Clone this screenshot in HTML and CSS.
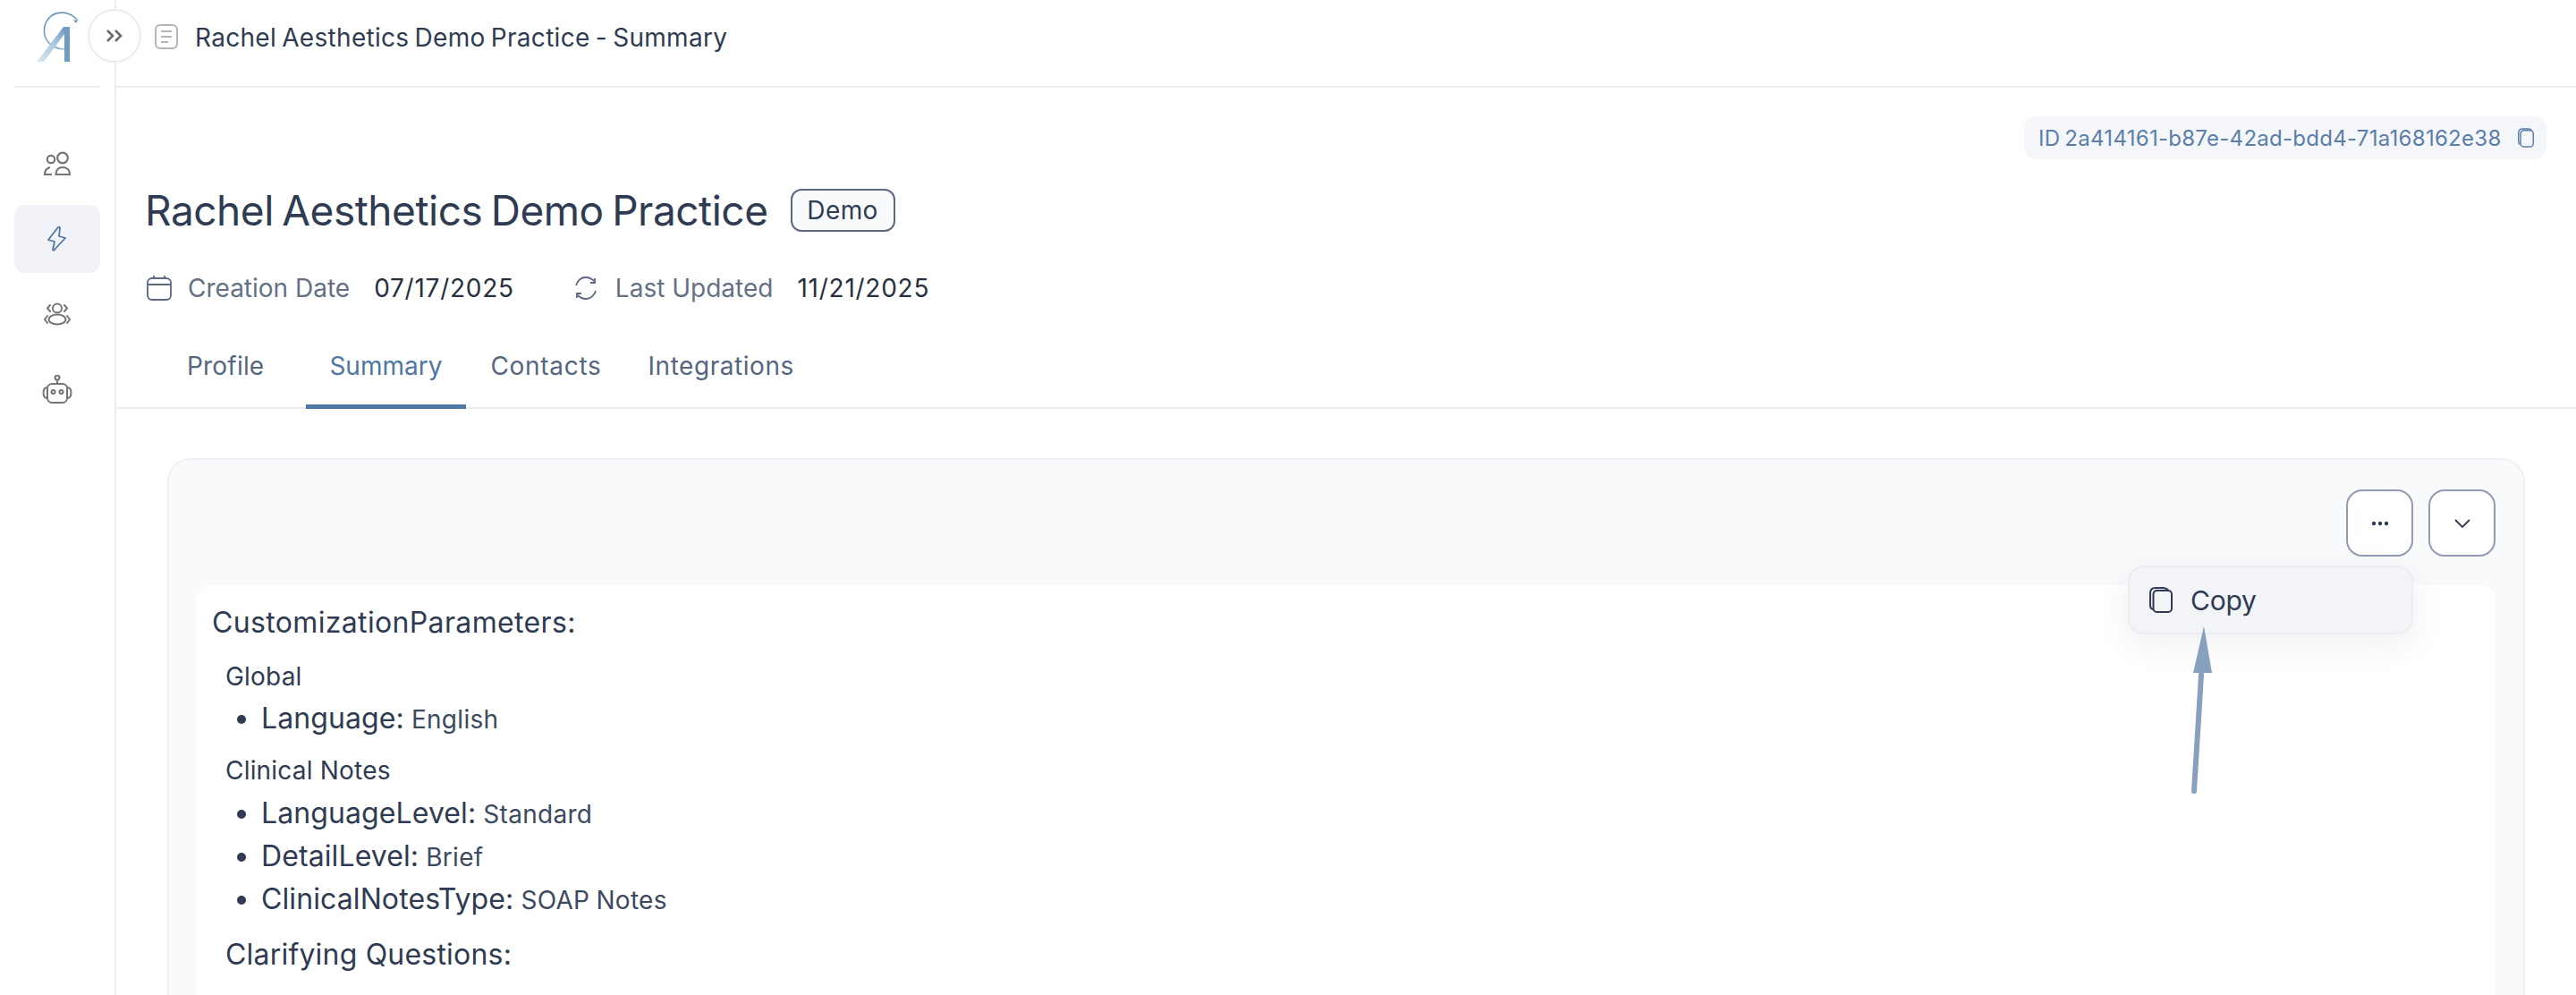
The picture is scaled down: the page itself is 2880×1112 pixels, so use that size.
FILE: index.html
```html
<!DOCTYPE html>
<html lang="en">
<head>
<meta charset="utf-8">
<title>Rachel Aesthetics Demo Practice - Summary</title>
<link rel="stylesheet" href="styles.css">
</head>
<body>
<div class="app">
  <aside class="sidebar">
    <div class="brand">
      <svg class="logo" viewBox="0 0 96 96" width="96" height="96" fill="none">
        <defs>
          <linearGradient id="lg" x1="0" y1="1" x2="1" y2="0"><stop offset="0" stop-color="#dbe8f2"/><stop offset=".55" stop-color="#a9c5dc"/><stop offset="1" stop-color="#5f8fb8"/></linearGradient>
          <linearGradient id="lr" x1="0" y1="0" x2="1" y2="1"><stop offset="0" stop-color="#5b8ab5"/><stop offset=".7" stop-color="#8eb0cc"/><stop offset="1" stop-color="#dfe9f1"/></linearGradient>
        </defs>
        <path d="M87 23C78 12 62 11 54 21C47 30 48 43 57 50C61 53 66 55 72 55" stroke="url(#lr)" stroke-width="1.6"/>
        <path d="M87 23.5l-5-1.5 2.500 3.500z" fill="#5b8ab5"/>
        <polygon points="41,69 49,69 78,30 71,30" fill="url(#lg)"/>
        <polygon points="72,30 78,30 78,69 72,69" fill="#6f9cc0"/>
      </svg>
    </div>
    <nav class="side-nav">
      <a class="side-item">
        <svg viewBox="0 0 32 28" width="32" height="28" fill="none" stroke="#757575" stroke-width="2.200"><circle cx="9" cy="9" r="4.200"/><circle cx="22" cy="7.500" r="5.800"/><path d="M10 26H2c0-4 2-7 6-8"/><path d="M14.500 26c0-5 3-8 7.500-8s8 3 8 8z"/></svg>
      </a>
      <a class="side-item active">
        <svg viewBox="0 0 24 28" width="24" height="28" fill="none" stroke="#4f77a3" stroke-width="1.800" stroke-linejoin="round"><path d="M13 1L2 15l7 2-2 9c0 1 1 1 2 0l12-13-7-2 1-9c0-1-1-2-2-1z"/></svg>
      </a>
      <a class="side-item">
        <svg viewBox="0 0 30 26" width="30" height="26" fill="none" stroke="#757575" stroke-width="2" stroke-linecap="round"><circle cx="15" cy="6.500" r="5"/><ellipse cx="15" cy="19" rx="9.500" ry="5.500"/><path d="M7 3L4 6.500 7 10M23 3l3 3.500-3 3.500M4 15l-3 4 3 4M26 15l3 4-3 4"/></svg>
      </a>
      <a class="side-item">
        <svg viewBox="0 0 34 32" width="34" height="32" fill="none" stroke="#757575" stroke-width="2"><circle cx="17" cy="3" r="2.500"/><path d="M17 6v4"/><rect x="6" y="10" width="22" height="21" rx="5"/><circle cx="12.500" cy="19" r="2"/><circle cx="21.500" cy="19" r="2"/><path d="M6 14C3 14 1.500 16 1.500 20s1.500 6 4.500 6M28 14c3 0 4.500 2 4.500 6s-1.500 6-4.500 6"/></svg>
      </a>
    </nav>
  </aside>

  <button class="collapse" type="button">
    <svg viewBox="0 0 20 16" width="20" height="16" fill="none" stroke="#6b6b6b" stroke-width="2.600"><path d="M2 2l6 6-6 6M11 2l6 6-6 6"/></svg>
  </button>

  <main class="main">
    <header class="topbar">
      <svg class="doc" viewBox="0 0 26 28" width="26" height="28" fill="none" stroke="#b4b4b4" stroke-width="2"><rect x="1" y="1" width="24" height="26" rx="5"/><path d="M7 8h12M7 14h12M7 20h8"/></svg>
      <span class="top-title">Rachel Aesthetics Demo Practice - Summary</span>
    </header>

    <div class="id-row">
      <div class="id-pill">
        <span>ID 2a414161-b87e-42ad-bdd4-71a168162e38</span>
        <svg viewBox="0 0 20 24" width="20" height="22" fill="none" stroke="#5b7fa8" stroke-width="1.600"><path d="M3 20c-1.500-.5-2-1.500-2-3V6c0-3 1.500-5 5-5h7c2 0 3 .5 4 2"/><rect x="3.500" y="3" width="15.500" height="20" rx="4"/></svg>
      </div>
    </div>

    <div class="title-row">
      <h1>Rachel Aesthetics Demo Practice</h1>
      <span class="badge">Demo</span>
    </div>

    <div class="meta-row">
      <div class="meta meta-created">
        <svg viewBox="0 0 28 28" width="28" height="28" fill="none" stroke="#5b6880" stroke-width="1.800"><rect x="1" y="3" width="26" height="24" rx="5"/><path d="M1 10h26M8 0v3M20 0v3"/></svg>
        <span class="meta-label">Creation Date</span>
        <span class="meta-value">07/17/2025</span>
      </div>
      <div class="meta">
        <svg viewBox="0 0 30 28" width="30" height="28" fill="none" stroke="#5b6880" stroke-width="1.800"><path d="M4 11C6 5 10 2 15 2c4 0 7 2 9 4M26 17c-2 6-6 9-11 9-4 0-7-2-9-4"/><path d="M20 8h5V3M10 20H5v5"/></svg>
        <span class="meta-label">Last Updated</span>
        <span class="meta-value">11/21/2025</span>
      </div>
    </div>

    <nav class="tabs">
      <a class="tab tab-first">Profile</a>
      <a class="tab tab-active">Summary</a>
      <a class="tab tab-contacts">Contacts</a>
      <a class="tab tab-last">Integrations</a>
    </nav>

    <section class="card">
      <div class="card-actions">
        <button class="icon-btn" type="button">
          <svg viewBox="0 0 20 6" width="20" height="6" fill="#2f3b52"><circle cx="3" cy="3" r="2.200"/><circle cx="10" cy="3" r="2.200"/><circle cx="17" cy="3" r="2.200"/></svg>
        </button>
        <button class="icon-btn" type="button">
          <svg viewBox="0 0 20 12" width="20" height="12" fill="none" stroke="#2f3b52" stroke-width="1.800"><path d="M2 2l8 8 8-8"/></svg>
        </button>
      </div>
      <div class="menu">
        <svg viewBox="0 0 26 29" width="26" height="29" fill="none" stroke="#2f3b52" stroke-width="2"><path d="M4 25c-2-.5-3-2-3-4V7c0-4 2-6 6-6h8c3 0 5 1 6 3"/><rect x="4.500" y="4" width="20.500" height="24" rx="4"/></svg>
        <span>Copy</span>
      </div>
      <svg class="arrow" viewBox="0 0 40 200" width="40" height="200" fill="none">
        <path d="M10 190L18 60" stroke="#87a0bd" stroke-width="6" stroke-linecap="round"/>
        <polygon points="21,6 9,58 30,58" fill="#87a0bd"/>
      </svg>
      <article class="summary">
        <h2>CustomizationParameters:</h2>
        <div class="block">
          <h3>Global</h3>
          <ul class="list list-a">
            <li><strong>Language:</strong> <span>English</span></li>
          </ul>
          <h3 class="h3-b">Clinical Notes</h3>
          <ul class="list list-b">
            <li><strong>LanguageLevel:</strong> <span>Standard</span></li>
            <li><strong>DetailLevel:</strong> <span>Brief</span></li>
            <li><strong>ClinicalNotesType:</strong> <span>SOAP Notes</span></li>
          </ul>
          <h2 class="h2-b">Clarifying Questions:</h2>
        </div>
      </article>
    </section>
  </main>
</div>
</body>
</html>
```
FILE: styles.css
```css
* { box-sizing: border-box; }
html, body { margin: 0; height: 100%; }
body {
  background: #fff;
  color: #2f3b52;
  font-family: Inter, "Noto Sans", "Liberation Sans", sans-serif;
  overflow: hidden;
}
h1, h2, h3, p, ul { margin: 0; padding: 0; font-weight: 400; }
button { font: inherit; cursor: pointer; }

.app { position: relative; display: flex; height: 1112px; overflow: hidden; }

.sidebar { flex: 0 0 130px; border-right: 2px solid #ebebf2; padding: 0 16px; }
.brand { height: 98px; border-bottom: 2px solid #ebebf2; }
.logo { display: block; margin-left: -16px; }
.side-nav { display: flex; flex-direction: column; padding-top: 47px; gap: 8px; }
.side-item { height: 76px; display: flex; align-items: center; justify-content: center; border-radius: 12px; }
.side-item.active { background: #f1f3f8; }

.collapse {
  position: absolute; left: 98px; top: 10px; width: 60px; height: 60px;
  border-radius: 50%; border: 2px solid #ebebf2; background: #fff;
  display: flex; align-items: center; justify-content: center; padding: 0;
}

.main { flex: 1; min-width: 0; }
.topbar { height: 98px; border-bottom: 2px solid #ebebf2; display: flex; align-items: flex-start; gap: 19px; padding: 27px 0 0 43px; }
.top-title { font-size: 28px; line-height: 30px; color: #2f3b52; letter-spacing: .3px; word-spacing: -2px; }
.doc { flex: none; }

.id-row { display: flex; justify-content: flex-end; padding: 32px 33px 0 0; }
.id-pill {
  height: 48px; width: 584px; border-radius: 14px; background: #f4f6fa; color: #5b7fa8;
  display: flex; align-items: center; justify-content: space-between; padding: 0 13px 0 16px;
  font-size: 24px; letter-spacing: .28px; word-spacing: -2px;
}

.title-row { display: flex; align-items: center; gap: 25px; margin: 33px 0 0 32px; height: 48px; }
h1 { font-size: 46px; line-height: 48px; color: #2f3b52; letter-spacing: -.47px; word-spacing: -3px; }
.badge {
  height: 48px; width: 117px; border: 2px solid #5b6880; border-radius: 12px; color: #2f3b52; background: #f9fafc;
  display: flex; align-items: center; justify-content: center; font-size: 28px; letter-spacing: .4px;
}

.meta-row { display: flex; align-items: center; margin: 48px 0 0 34px; height: 30px; gap: 65px; }
.meta { display: flex; align-items: center; }
.meta svg { flex: none; margin-right: 18px; }
.meta-label { font-size: 28px; color: #667085; margin-right: 27px; }
.meta-value { font-size: 28px; color: #27303f; letter-spacing: .75px; }

.tabs { display: flex; padding-left: 52px; margin-top: 30px; border-bottom: 2px solid #ebebf2; height: 90px; }
.tab { display: block; padding: 24px 27px 0; height: 90px; font-size: 28px; line-height: 36px; color: #566580; letter-spacing: .2px; }
.tab-first { margin-right: 20px; }
.tab-active { color: #4f77a3; border-bottom: 5px solid #4f77a3; letter-spacing: 0; padding-left: 26px; }
.tab-contacts { letter-spacing: .7px; }
.tab-last { margin-left: -2px; letter-spacing: .55px; }

.card {
  position: relative; margin: 55px 57px 0; height: 700px; padding: 33px 31px 0 31px;
  background: #f9fafc; border: 2px solid #eff0f5; border-radius: 26px;
}
.card-actions { display: flex; justify-content: flex-end; gap: 17px; }
.icon-btn {
  width: 75px; height: 75px; border: 2px solid #929bb2; border-radius: 18px; background: #fff;
  display: flex; align-items: center; justify-content: center; padding: 0;
}
.menu {
  position: absolute; top: 118px; right: 123px; width: 319px; height: 77px; z-index: 2;
  background: #f3f4f7; border: 2px solid #ecedf2; border-radius: 18px;
  box-shadow: 0 10px 40px rgba(20, 30, 60, .07);
  display: flex; align-items: center; gap: 20px; padding-left: 22px;
  font-size: 30px; color: #2f3b52; letter-spacing: -.2px;
}
.arrow { position: absolute; left: 2254px; top: 180px; z-index: 3; }

.summary { margin-top: 32px; height: 500px; background: #fff; border-radius: 16px; padding: 22px 0 0 17px; }
h2 { font-size: 32px; line-height: 40px; color: #2f3b52; letter-spacing: .35px; }
h3 { font-size: 28px; line-height: 40px; color: #2f3b52; letter-spacing: .2px; }
.block { margin: 20px 0 0 15px; }
.list { padding-left: 40px; color: #2f3b52; }
.list li { height: 48px; line-height: 48px; font-size: 32px; word-spacing: -1px; }
.list-a { margin-top: 3px; }
.list-b { margin-top: 4px; }
.h3-b { margin-top: 14px; }
.h2-b { margin-top: 18px; letter-spacing: .2px; }
.list strong { font-weight: 400; letter-spacing: .1px; }
.list span { font-size: 28px; color: #3c4a60; letter-spacing: .3px; }
```
